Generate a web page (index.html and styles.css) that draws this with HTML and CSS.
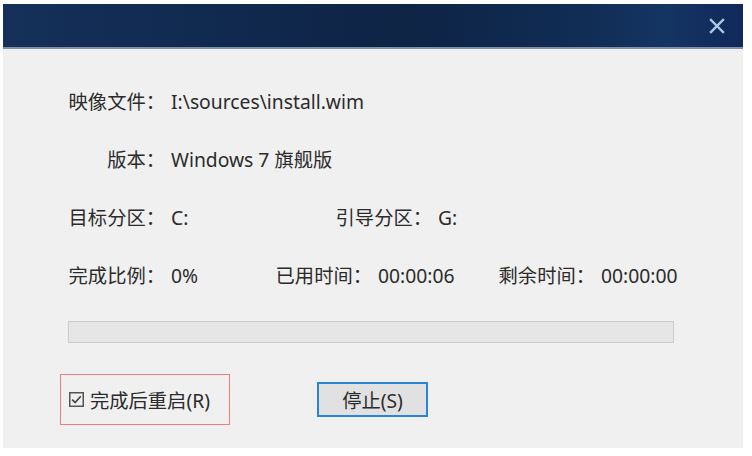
FILE: index.html
```html
<!DOCTYPE html>
<html lang="zh-CN">
<head>
<meta charset="utf-8">
<link rel="stylesheet" href="styles.css">
</head>
<body>
<div class="window">
  <div class="titlebar">
    <svg class="close" viewBox="0 0 16 16" width="16" height="16"><path d="M2 2 L14 14 M14 2 L2 14" stroke="#a9c9ec" stroke-width="2.4" stroke-linecap="square"/></svg>
  </div>
  <div class="content">
    <div class="row">
      <div class="field"><span class="label">映像文件：</span><span class="value">I:\sources\install.wim</span></div>
    </div>
    <div class="row">
      <div class="field"><span class="label">版本：</span><span class="value">Windows 7 旗舰版</span></div>
    </div>
    <div class="row">
      <div class="field w267"><span class="label">目标分区：</span><span class="value">C:</span></div>
      <div class="field"><span class="label">引导分区：</span><span class="value">G:</span></div>
    </div>
    <div class="row">
      <div class="field w207"><span class="label">完成比例：</span><span class="value">0%</span></div>
      <div class="field w223"><span class="label">已用时间：</span><span class="value">00:00:06</span></div>
      <div class="field"><span class="label">剩余时间：</span><span class="value">00:00:00</span></div>
    </div>
    <div class="progress"></div>
    <div class="bottom">
      <label class="restart">
        <svg class="check" viewBox="0 0 15 15" width="15" height="15"><rect x="0.75" y="0.75" width="13.5" height="13.5" fill="none" stroke="#555555" stroke-width="1.5"/><path d="M3.2 7.6 L6.1 10.5 L11.8 4.2" fill="none" stroke="#444444" stroke-width="1.7"/></svg>
        <span>完成后重启(R)</span>
      </label>
      <button class="stop">停止(S)</button>
    </div>
  </div>
</div>
</body>
</html>
```
FILE: styles.css
```css
html, body {
  margin: 0;
  padding: 0;
  background: #ffffff;
}
body {
  font-family: "Noto Sans", "Noto Sans CJK SC", sans-serif;
  font-size: 19.3px;
  color: #2b2b2b;
}
.window {
  margin: 4px 0 0 3px;
  width: 740px;
  height: 444px;
  background: #f0f0f0;
  display: flex;
  flex-direction: column;
}
.titlebar {
  height: 43px;
  border-bottom: 2px solid #7f90a8;
  background: linear-gradient(90deg, #15305a 0%, #112a50 25%, #0e2445 55%, #102b52 75%, #143462 90%, #10295a 100%);
  display: flex;
  align-items: center;
  justify-content: flex-end;
  padding-right: 18px;
}
.close {
  display: block;
  margin-top: 1px;
}
.content {
  padding: 41px 0 0 65px;
  display: flex;
  flex-direction: column;
}
.row {
  height: 24px;
  margin-bottom: 34px;
  display: flex;
  align-items: center;
  line-height: 24px;
}
.row:nth-child(4) {
  margin-bottom: 33px;
}
.field {
  display: flex;
  align-items: center;
}
.w267 { width: 267px; }
.w207 { width: 207px; }
.w223 { width: 223px; }
.label {
  width: 103px;
  box-sizing: border-box;
  padding-right: 6px;
  text-align: right;
  white-space: nowrap;
}
.value {
  white-space: nowrap;
}
.progress {
  width: 604px;
  height: 20px;
  border: 1px solid #cccccc;
  background: #e6e6e6;
  margin-bottom: 31px;
}
.bottom {
  display: flex;
  align-items: center;
  margin-left: -8px;
}
.restart {
  width: 170px;
  height: 51px;
  box-sizing: border-box;
  border: 1px solid #f07b7b;
  display: flex;
  align-items: center;
  gap: 6px;
  padding-left: 8px;
}
.check {
  display: block;
}
.stop {
  margin-left: 87px;
  width: 111px;
  height: 35px;
  border: 2px solid #2a84dc;
  background: #e1e1e1;
  font-family: "Noto Sans", "Noto Sans CJK SC", sans-serif;
  font-size: 19.3px;
  color: #2b2b2b;
  padding: 0;
}
```
